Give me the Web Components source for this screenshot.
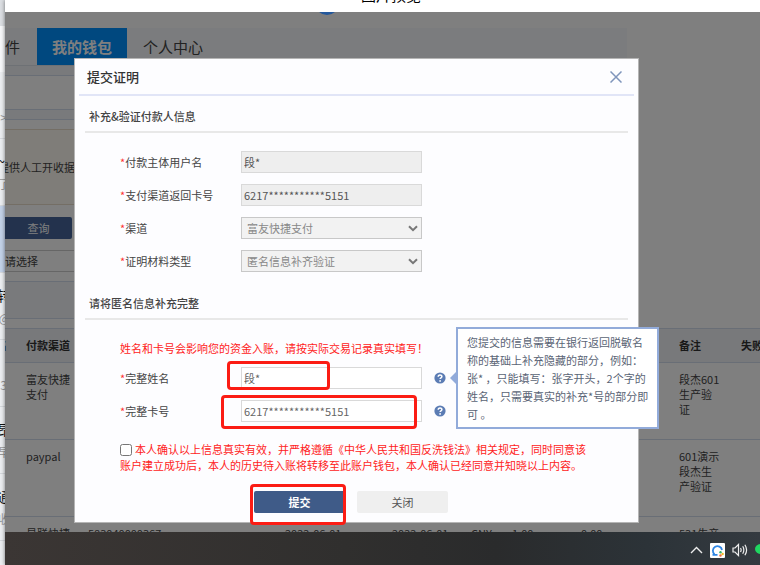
<!DOCTYPE html>
<html lang="zh-CN">
<head>
<meta charset="utf-8">
<title>图片预览</title>
<style>
html, body { margin: 0; height: 100%; }
body { font-family: "Noto Sans CJK SC", "Noto Sans", sans-serif; font-size: 11px; color: #444; overflow: hidden; background: #fff; }
</style>
</head>
<body>
<preview-window></preview-window>
<script>
function define(name, html, setup) {
  const template = document.createElement('template');
  template.innerHTML = html;
  customElements.define(name, class extends HTMLElement {
    constructor() {
      super();
      this.attachShadow({ mode: 'open' }).append(template.content.cloneNode(true));
    }
    connectedCallback() {
      if (setup) setup(this, this.shadowRoot);
    }
  });
}

/* Narrow slice of the chat list behind the viewer */
define('chat-rail', `
<style>
:host { display: flex; flex-direction: column; width: 5px; overflow: hidden; background: #eceef1; }
.top { flex: 0 0 26px; background: #dcdfe3; }
.search { flex: 0 0 46px; background: #f7f8fa; }
.item { flex: 0 0 66px; border-bottom: 1px solid #d6d9dd; display: flex; flex-direction: column; align-items: flex-end; justify-content: center; gap: 4px; }
.item b { font: 14px/20px "Noto Sans CJK SC", sans-serif; color: #111; height: 20px; margin-right: -6px; }
.item .tilde { margin-right: 0; }
.item span { font-size: 12px; line-height: 18px; color: #999; height: 18px; margin-right: -5px; }
.item .in { margin-right: -2px; }
.on { background: #c3d2e8; }
</style>
<div class="top"></div><div class="search"></div>
<div class="item"><b></b><span class="in">&gt;</span></div>
<div class="item"><b class="tilde">~</b><span>了</span></div>
<div class="item on"></div>
<div class="item"><b>转</b><span>@</span></div>
<div class="item"><b></b><span class="in">3</span></div>
<div class="item"><b>昂</b><span>早</span></div>
<div class="item"><b>通</b><span>收</span></div>
<div class="item"><b>方</b></div>`);

define('nav-tabs', `
<style>
:host { display: flex; height: 37px; margin-right: 133px; background: #f6f9fc; border-bottom: 1px solid #dce2ea; font-size: 15px; }
a { color: #444; text-decoration: none; line-height: 38px; padding: 0 16px; }
a.first { padding-left: 10px; padding-right: 17px; }
a.on { background: #0090ff; color: #fff; font-weight: 700; padding: 0 15px; height: 37px; }
</style>
<a class="first" href="#doc">件</a><a class="on" href="#wallet">我的钱包</a><a href="#me">个人中心</a>`);

define('payment-table', `
<style>
:host { display: block; }
table { width: 100%; border-collapse: collapse; table-layout: fixed; line-height: 15px; }
th, td { text-align: left; vertical-align: top; padding: 0; border-top: 1px solid #d3dcec; font-weight: 400; white-space: nowrap; }
th { background: #f0f3f7; height: 33px; vertical-align: middle; font-weight: 700; color: #333; }
td { height: 67px; padding-top: 9px; }
th:first-child { padding-left: 1px; }
</style>
<table>
<colgroup><col style="width:31px"><col style="width:62px"><col style="width:197px"><col style="width:107px"><col style="width:79px"><col style="width:41px"><col style="width:69px"><col style="width:98px"><col style="width:62px"><col></colgroup>
<thead><tr><th>名</th><th>付款渠道</th><th></th><th></th><th></th><th></th><th></th><th></th><th>备注</th><th>失败</th></tr></thead>
<tbody>
<tr><td></td><td>富友快捷<br>支付</td><td></td><td></td><td></td><td></td><td></td><td></td><td>段杰601<br>生产验<br>证</td><td></td></tr>
<tr><td></td><td>paypal</td><td></td><td></td><td></td><td></td><td></td><td></td><td>601演示<br>段杰生<br>产验证</td><td></td></tr>
<tr><td></td><td>易联快捷</td><td>583040000367</td><td>2022-06-01</td><td>2022-06-01</td><td>CNY</td><td>1.00</td><td>0.00</td><td>531生产</td><td></td></tr>
</tbody>
</table>`);

define('wallet-page', `
<style>
:host { display: block; background: #fff; padding-top: 16px; margin-left: -10px; }
.narrow { margin-right: 133px; }
.strip { height: 9px; background: #f2f5f8; border-bottom: 1px solid #d3dcec; }
.box { height: 33px; border-bottom: 1px solid #d3dcec; }
.gap { height: 9px; }
.notice { height: 74px; background: #fffaf2; border: 1px solid #e8dccb; display: flex; align-items: center; padding-left: 2px; margin-bottom: 12px; }
button { display: block; height: 22px; width: 77px; padding: 0 0 0 10px; border: 0; border-radius: 2px; background: #46659a; color: #fff; font: inherit; margin-bottom: 11px; }
select { display: block; appearance: none; height: 22px; width: 300px; padding: 0 9px; border: 1px solid #ccc; background: #fff; color: #444; font: inherit; margin-bottom: 9px; border-radius: 0; }
.panel { height: 36px; background: #f2f5f8; border-top: 1px solid #d3dcec; border-bottom: 1px solid #d3dcec; margin-bottom: 9px; }
</style>
<nav-tabs></nav-tabs>
<div class="narrow">
<div class="strip"></div><div class="box"></div><div class="strip"></div><div class="gap"></div>
<div class="notice">提供人工开收据</div>
<button type="button">查询</button>
<select aria-label="筛选"><option>请选择</option></select>
<div class="panel"></div>
</div>
<payment-table></payment-table>`);

define('section-title', `
<style>
:host { display: block; padding: 8px 4px 3px; line-height: 24px; color: #444; border-bottom: 2px solid #e8e8e8; font-weight: 500; }
</style><slot></slot>`);

/* Red frame placed over a control */
define('mark-box', `
<style>
:host { position: absolute; box-sizing: border-box; border: 3px solid #fb1c14; border-radius: 4px; pointer-events: none; z-index: 1; }
</style>`);

define('help-tip', `
<style>
:host { display: block; position: relative; width: 12px; height: 12px; }
svg { display: block; }
.bubble { position: absolute; left: 22px; top: 50%; transform: translateY(-50%); background: #fff; border: 2px solid #92abda; padding: 4px 9px; line-height: 18px; color: #5a6475; white-space: nowrap; width: 181px; z-index: 2; }
.bubble::before { content: ""; position: absolute; left: -8px; top: 50%; margin-top: -6px; border: 6px solid transparent; border-right-color: #92abda; border-left: 0; }
:host(:not([open])) .bubble { display: none; }
</style>
<svg width="12" height="12" viewBox="0 0 12 12"><circle cx="6" cy="6" r="5.6" fill="#5b7cb4"/><path d="M4.2 4.7C4.2 2.4 7.9 2.4 7.9 4.6 7.9 5.8 6.1 5.9 6.1 7.1" fill="none" stroke="#fff" stroke-width="1.5"/><circle cx="6.1" cy="8.9" r=".9" fill="#fff"/></svg>
<div class="bubble" role="tooltip"><slot></slot></div>`);

define('form-field', `
<style>
:host { display: flex; align-items: center; height: 22px; }
label { flex: 0 0 121px; }
i { color: #f33; font-style: normal; }
.box { display: grid; position: relative; flex: 0 1 181px; margin-right: 12px; }
input, select { grid-area: 1 / 1; box-sizing: border-box; width: 100%; min-width: 0; height: 22px; margin: 0; padding: 0 2px; border: 1px solid #d9d9d9; border-radius: 0; background: #fff; color: #666; font: inherit; appearance: none; }
input:read-only { background: #eee; color: #555; }
select { padding: 0 5px; background: #f2f2f2; color: #888; border-color: #c8c8c8; opacity: 1; }
svg { grid-area: 1 / 1; justify-self: end; align-self: center; margin-right: 4px; pointer-events: none; }
</style>
<label for="control"><i>*</i><span></span></label>
<div class="box"><slot name="mark"></slot></div>
<slot></slot>`, (host, root) => {
  root.querySelector('span').textContent = host.getAttribute('label');
  const box = root.querySelector('.box');
  const value = host.getAttribute('value');
  let control;
  if (host.hasAttribute('choice')) {
    control = document.createElement('select');
    control.append(new Option(value));
    control.disabled = true;
    box.insertAdjacentHTML('beforeend', '<svg width="10" height="7" viewBox="0 0 10 7"><path d="M1 1.200L5 5.200L9 1.200" fill="none" stroke="#777" stroke-width="2"/></svg>');
  } else {
    control = document.createElement('input');
    control.value = value;
    control.readOnly = host.hasAttribute('locked');
  }
  control.id = 'control';
  box.prepend(control);
});

define('proof-dialog', `
<style>
:host { display: block; box-sizing: border-box; background: #fdfdff; border: 1px solid #b5b5b5; }
header { display: flex; align-items: center; justify-content: space-between; height: 35px; margin: 0 4px; padding: 0 12px 0 8px; border-bottom: 2px solid #e1e5f7; }
h1 { margin: 0; font-size: 13px; font-weight: 500; color: #333; }
.close { border: 0; background: none; padding: 0; width: 12px; height: 12px; }
.close svg { display: block; }
form { margin: 0; padding: 0 10px 9px; }
.group { display: grid; gap: 11px; padding: 18px 0 0 35px; margin-bottom: 11px; }
.last { margin-bottom: 0; }
.warn { margin: 0 0 -2px; line-height: 20px; color: #f22; }
.consent { display: block; margin: 19px 0 18px 35px; line-height: 16px; color: #f22; white-space: nowrap; }
.consent input { width: 12px; height: 12px; margin: 0 3px 0 0; vertical-align: -2px; }
.actions { display: flex; gap: 12px; padding-left: 169px; }
.wrap { position: relative; display: flex; }
.actions button { width: 91px; height: 22px; padding: 0; border: 0; border-radius: 2px; font: inherit; background: #efefef; color: #555; }
.actions .go { background: #3f5b88; color: #fff; font-weight: 700; }
.m1 { left: -14px; top: -6px; width: 103px; height: 29px; }
.m2 { left: -20px; top: -5px; width: 196px; height: 34px; }
.m3 { left: -4px; top: -7px; width: 96px; height: 41px; }
</style>
<header><h1>提交证明</h1><button class="close" aria-label="关闭窗口"><svg width="12" height="12" viewBox="0 0 12 12"><path d="M.5 .5L11.5 11.5M11.5 .5L.5 11.5" stroke="#7f95bb" stroke-width="1.5"/></svg></button></header>
<form>
<section-title>补充&amp;验证付款人信息</section-title>
<div class="group">
<form-field label="付款主体用户名" value="段*" locked></form-field>
<form-field label="支付渠道返回卡号" value="6217***********5151" locked></form-field>
<form-field label="渠道" value="富友快捷支付" choice></form-field>
<form-field label="证明材料类型" value="匿名信息补齐验证" choice></form-field>
</div>
<section-title>请将匿名信息补充完整</section-title>
<div class="group last">
<p class="warn">姓名和卡号会影响您的资金入账，请按实际交易记录真实填写！</p>
<form-field label="完整姓名" value="段*"><mark-box slot="mark" class="m1"></mark-box><help-tip open>您提交的信息需要在银行返回脱敏名<br>称的基础上补充隐藏的部分，例如：<br>张* ，只能填写：张字开头，2个字的<br>姓名，只需要真实的补充*号的部分即<br>可 。</help-tip></form-field>
<form-field label="完整卡号" value="6217***********5151"><mark-box slot="mark" class="m2"></mark-box><help-tip></help-tip></form-field>
</div>
<label class="consent"><input type="checkbox">本人确认以上信息真实有效，并严格遵循《中华人民共和国反洗钱法》相关规定，同时同意该<br>账户建立成功后，本人的历史待入账将转移至此账户钱包，本人确认已经同意并知晓以上内容。</label>
<div class="actions"><div class="wrap"><button class="go" type="button">提交</button><mark-box class="m3"></mark-box></div><button type="button">关闭</button></div>
</form>`);

define('task-bar', `
<style>
:host { display: flex; align-items: center; justify-content: flex-end; gap: 7px; height: 33px; overflow: hidden; background: linear-gradient(90deg, #3b3634, #302f2e 45%, #2a2b2c 65%, #2c3338 85%, #343a40); }
svg { display: block; flex: none; margin-top: 3px; }
.cut { margin-right: -8px; }
</style>
<svg width="13" height="8" viewBox="0 0 13 8"><path d="M1 7L6.500 1.500L12 7" fill="none" stroke="#eee" stroke-width="1.400"/></svg>
<svg width="15" height="15" viewBox="0 0 15 15"><rect width="15" height="15" rx="1" fill="#fff"/><path d="M4.500 11.300A4.600 4.600 0 1 1 12 7M2.500 11.800L7.500 11.800" fill="none" stroke="#2f86e4" stroke-width="1.800"/><circle cx="10.500" cy="9.300" r="1.200" fill="#34b36a"/><circle cx="12.600" cy="11" r="1.200" fill="#f5b91e"/><circle cx="10.500" cy="12.500" r="1.200" fill="#f26a3d"/></svg>
<svg width="16" height="14" viewBox="0 0 16 14"><path d="M1 5H3L6.500 1.500V12.500L3 9H1Z" fill="none" stroke="#eee" stroke-width="1.200"/><path d="M8.500 5Q9.800 7 8.500 9M10.700 3.300Q13 7 10.700 10.700M12.900 1.700Q16.300 7 12.900 12.300" fill="none" stroke="#eee" stroke-width="1.200"/></svg>
<svg class="cut" width="13" height="12" viewBox="0 0 13 12"><ellipse cx="6" cy="5" rx="6" ry="5" fill="#1fd760"/></svg>`);

define('preview-window', `
<style>
:host { display: flex; height: 100vh; }
main { flex: 1; min-width: 0; display: flex; flex-direction: column; box-shadow: 0 0 4px #0008; }
.title { flex: none; height: 12px; overflow: hidden; text-align: center; padding-left: 17px; background: #fff; color: #000; font-size: 15px; line-height: 16px; }
.title span { display: block; margin-top: -13px; }
.stage { position: relative; flex: 1; min-height: 0; }
.clip { position: absolute; inset: 0; overflow: hidden; }
.shade { position: absolute; inset: 0; background: #00000080; }
.orb { position: absolute; left: 310px; top: -21px; width: 24px; height: 24px; border-radius: 50%; background: #24589c; }
proof-dialog { position: absolute; left: 69px; right: 121px; top: 46px; }
</style>
<chat-rail></chat-rail>
<main>
<div class="title"><span>图片预览</span></div>
<div class="stage">
<div class="clip"><wallet-page></wallet-page><div class="shade"></div><div class="orb"></div></div>
<proof-dialog role="dialog" aria-label="提交证明"></proof-dialog>
</div>
<task-bar></task-bar>
</main>`);
</script>
</body>
</html>
